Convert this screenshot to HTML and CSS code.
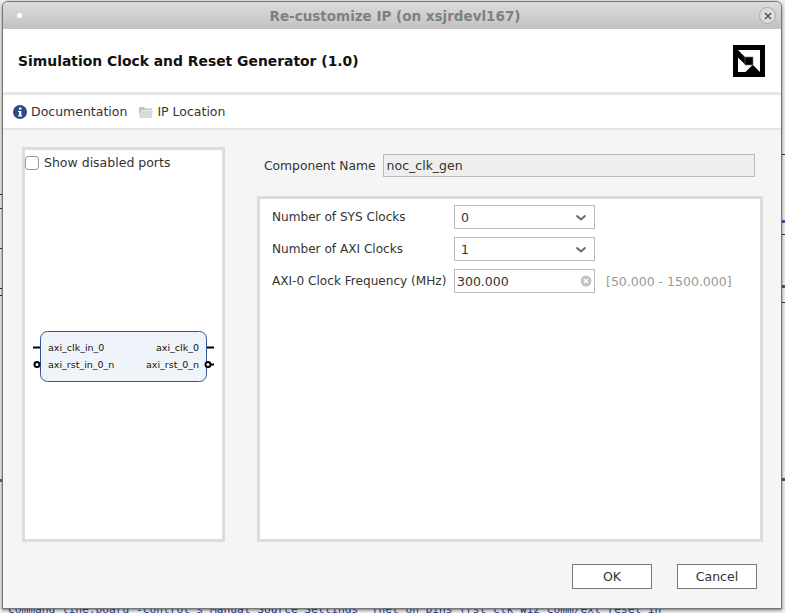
FILE: index.html
```html
<!DOCTYPE html>
<html>
<head>
    <title>Re-customize IP</title>
    <link rel="stylesheet" href="styles.css">
</head>
<body>
    <div class="behind-text">Command line:board -control s Manual Source Settings  [net on pins (rst clk wiz comm/ext reset in</div>
    <div class="window">
        <div class="titlebar">
            <span class="dot"></span>
            <span class="title">Re-customize IP (on xsjrdevl167)</span>
            <span class="close">
                <svg width="10" height="10" viewBox="0 0 10 10"><path d="M2 2L8 8M8 2L2 8" stroke="#555" stroke-width="1.5"/></svg>
            </span>
        </div>

        <header class="head">
            <h1>Simulation Clock and Reset Generator (1.0)</h1>
            <svg class="logo" width="32" height="32" viewBox="0 0 32 32">
                <rect width="32" height="32" fill="#000"/>
                <path d="M5 5H27V27L20 20V12H12Z" fill="#fff"/>
                <path d="M5 12.5L12 19.5V20H19.5L12.500 27H5Z" fill="#fff"/>
                <rect x="12" y="12" width="8" height="8" fill="#000" stroke="#777" stroke-width="0.6"/>
            </svg>
        </header>

        <div class="toolbar">
            <a class="tool">
                <svg width="14" height="14" viewBox="0 0 14 14">
                    <circle cx="7" cy="7" r="7" fill="#2c4a86"/>
                    <rect x="6" y="2.5" width="2.4" height="2.2" fill="#fff"/>
                    <path d="M5 6H8.3V10.5H9.3V11.5H5V10.5H6V7H5Z" fill="#fff"/>
                </svg>
                Documentation
            </a>
            <a class="tool">
                <svg width="14" height="12" viewBox="0 0 14 12">
                    <path d="M0 1H5L6 2.5H13V4H3L0 10Z" fill="#c4c4c4"/>
                    <path d="M3 4.5H14L12.500 12H0Z" fill="#d8d8d8"/>
                </svg>
                IP Location
            </a>
        </div>

        <main class="content">
            <div class="columns">
                <section class="symbol-panel">
                    <label class="check-row"><span class="checkbox"></span>Show disabled ports</label>
                    <svg class="symbol" width="197" height="62" viewBox="0 0 197 62">
                        <rect x="15.500" y="5.500" width="166" height="50" rx="7" fill="#eff4fa" stroke="#2f5597"/>
                        <path d="M8 21.500H15M182 21.500H189" stroke="#000" stroke-width="2"/>
                        <circle cx="12" cy="38.500" r="2.500" fill="#fff" stroke="#000" stroke-width="2"/>
                        <circle cx="183" cy="38.500" r="2.500" fill="#fff" stroke="#000" stroke-width="2"/>
                        <path d="M186 38.500H189" stroke="#000" stroke-width="2"/>
                        <text x="23" y="25" class="port">axi_clk_in_0</text>
                        <text x="23" y="42" class="port">axi_rst_in_0_n</text>
                        <text x="174" y="25" class="port right">axi_clk_0</text>
                        <text x="174" y="42" class="port right">axi_rst_0_n</text>
                    </svg>
                </section>

                <section class="settings">
                    <div class="name-row">
                        <span class="label">Component Name</span>
                        <div class="name-field">noc_clk_gen</div>
                    </div>
                    <div class="params">
                        <div class="param-row">
                            <span class="param-label">Number of SYS Clocks</span>
                            <div class="combo"><span>0</span><svg width="12" height="7" viewBox="0 0 12 7"><path d="M1.500 1.500L6 5.500L10.500 1.500" fill="none" stroke="#666" stroke-width="1.800"/></svg></div>
                        </div>
                        <div class="param-row">
                            <span class="param-label">Number of AXI Clocks</span>
                            <div class="combo"><span>1</span><svg width="12" height="7" viewBox="0 0 12 7"><path d="M1.500 1.500L6 5.500L10.500 1.500" fill="none" stroke="#666" stroke-width="1.800"/></svg></div>
                        </div>
                        <div class="param-row">
                            <span class="param-label">AXI-0 Clock Frequency (MHz)</span>
                            <div class="combo text-entry"><span>300.000</span><svg width="12" height="12" viewBox="0 0 12 12"><circle cx="6" cy="6" r="5.500" fill="#c4c4c4"/><path d="M4 4L8 8M8 4L4 8" stroke="#fff" stroke-width="1.500"/></svg></div>
                            <span class="range">[50.000 - 1500.000]</span>
                        </div>
                    </div>
                </section>
            </div>

            <div class="buttons">
                <button>OK</button>
                <button>Cancel</button>
            </div>
        </main>
    </div>
</body>
</html>
```

FILE: styles.css
```css
html, body {
    margin: 0;
    padding: 0;
}

/* the ticks at the edges are the main window showing around the dialog */
body {
    width: 785px;
    height: 613px;
    overflow: hidden;
    position: relative;
    background-color: #ececec;
    background-image:
        linear-gradient(#1f2f55, #1f2f55), linear-gradient(#1f2f55, #1f2f55),
        linear-gradient(#1f2f55, #1f2f55), linear-gradient(#1f2f55, #1f2f55),
        linear-gradient(#1f2f55, #1f2f55), linear-gradient(#3b67c0, #3b67c0),
        linear-gradient(#1f2f55, #1f2f55), linear-gradient(#3b5a9c, #3b5a9c),
        linear-gradient(#1f2f55, #1f2f55), linear-gradient(#3b5a9c, #3b5a9c),
        linear-gradient(#1f2f55, #1f2f55), linear-gradient(#3b5a9c, #3b5a9c);
    background-repeat: no-repeat;
    background-size:
        2px 1px, 2px 1px, 2px 1px, 2px 1px, 2px 1px, 2px 3px,
        3px 1px, 3px 3px, 3px 1px, 3px 3px, 3px 1px, 3px 3px;
    background-position:
        0 194px, 0 208px, 0 248px, 0 288px, 0 295px, 0 479px,
        782px 154px, 782px 220px, 782px 234px, 782px 285px, 782px 302px, 782px 478px;
    font-family: "DejaVu Sans", sans-serif;
    font-size: 12.5px;
    color: #333;
}

.behind-text {
    position: absolute;
    left: 8px;
    top: 603px;
    font-family: "DejaVu Sans Mono", monospace;
    font-size: 11.2px;
    line-height: 14px;
    color: #1a3aa0;
    white-space: pre;
}

.window {
    position: absolute;
    left: 2px;
    top: 1px;
    width: 778px;
    height: 606px;
    display: flex;
    flex-direction: column;
    background-color: #f5f5f5;
    border: 1px solid #777;
    border-radius: 6px 6px 0 0;
    box-shadow: 0 1px 3px rgba(0, 0, 0, 0.55);
}

.titlebar {
    height: 27px;
    flex: none;
    display: flex;
    align-items: center;
    justify-content: space-between;
    padding: 0 5px 0 14px;
    background: linear-gradient(#dcdcdc, #c2c2c2);
    border-radius: 5px 5px 0 0;
}

.dot {
    width: 5px;
    height: 5px;
    margin-right: 9px;
    border-radius: 50%;
    background-color: #fff;
}

.title {
    font-weight: bold;
    font-size: 13.5px;
    color: #808080;
}

.close {
    width: 15px;
    height: 15px;
    display: flex;
    align-items: center;
    justify-content: center;
    border: 1px solid #aaa;
    border-radius: 50%;
    background-color: #ddd;
}

.head {
    height: 63px;
    flex: none;
    display: flex;
    align-items: center;
    justify-content: space-between;
    padding: 0 16px 0 15px;
    background-color: #fff;
    border-bottom: 3px solid #e5e5e5;
}

.head h1 {
    margin: 0;
    font-size: 13.9px;
    font-weight: bold;
    color: #111;
}

.toolbar {
    height: 33px;
    flex: none;
    display: flex;
    align-items: center;
    gap: 12px;
    padding-left: 10px;
    background-color: #fff;
    border-bottom: 2px solid #e5e5e5;
}

.tool {
    display: flex;
    align-items: center;
    gap: 4px;
}

.content {
    flex: 1;
    display: flex;
    flex-direction: column;
    padding: 17px 18px 0 19px;
}

.columns {
    display: flex;
    gap: 32px;
    height: 395px;
}

.symbol-panel {
    width: 197px;
    flex: none;
    background-color: #fff;
    border: 3px solid #dcdcdc;
}

.check-row {
    display: flex;
    align-items: center;
    gap: 5px;
    padding-top: 5px;
}

.checkbox {
    width: 12px;
    height: 12px;
    background-color: #fff;
    border: 1px solid #999;
    border-radius: 3px;
}

.symbol {
    display: block;
    margin-top: 156px;
}

.port {
    font-family: "DejaVu Sans", sans-serif;
    font-size: 9.5px;
    fill: #111;
}

.right {
    text-anchor: end;
}

.settings {
    flex: 1;
    display: flex;
    flex-direction: column;
}

.name-row {
    display: flex;
    align-items: center;
    gap: 7px;
    padding: 7px 8px 0 7px;
}

.label {
    font-size: 12.3px;
}

.name-field {
    flex: 1;
    height: 21px;
    line-height: 21px;
    padding-left: 3px;
    background-color: #eee;
    border: 1px solid #bbb;
}

.params {
    margin-top: 19px;
    flex: 1;
    padding: 6px 12px 5px;
    background-color: #fff;
    border: 3px solid #dcdcdc;
}

.param-row {
    display: flex;
    align-items: center;
    height: 24px;
    margin-bottom: 8px;
}

.param-label {
    width: 182px;
    flex: none;
    font-size: 12.1px;
}

.combo {
    width: 133px;
    height: 22px;
    flex: none;
    display: flex;
    align-items: center;
    justify-content: space-between;
    padding-left: 6px;
    background-color: #fff;
    border: 1px solid #bbb;
}

.combo svg {
    margin-right: 7px;
}

.text-entry {
    padding-left: 2px;
    width: 137px;
}

.text-entry svg {
    margin-right: 2px;
}

.range {
    margin-left: 11px;
    color: #999;
}

.buttons {
    display: flex;
    justify-content: flex-end;
    gap: 25px;
    margin-top: 22px;
    padding-right: 6px;
}

.buttons button {
    width: 80px;
    height: 25px;
    padding: 0;
    font-family: "DejaVu Sans", sans-serif;
    font-size: 12.5px;
    color: #333;
    background-color: #fff;
    border: 1px solid #777;
}
```
